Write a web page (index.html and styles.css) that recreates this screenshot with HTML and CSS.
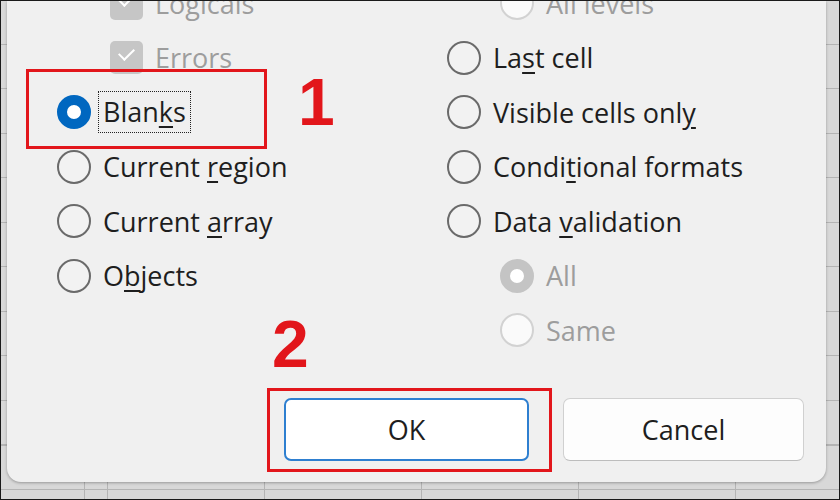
FILE: index.html
```html
<!DOCTYPE html>
<html lang="en">
<head>
    <meta charset="UTF-8">
    <meta name="viewport" content="width=device-width, initial-scale=1.0">
    <title>Go To Special</title>
    <link rel="stylesheet" href="styles.css">
</head>
<body>
    <div class="frame">
        <div class="dialog">
            <div class="options">
                <div class="col">
                    <div class="opt sub disabled"><span class="check"></span><span>Logicals</span></div>
                    <div class="opt sub disabled"><span class="check"></span><span>Errors</span></div>
                    <div class="opt"><span class="radio on"></span><span class="focus">Blan<u>k</u>s</span></div>
                    <div class="opt"><span class="radio"></span><span>Current <u>r</u>egion</span></div>
                    <div class="opt"><span class="radio"></span><span>Current <u>a</u>rray</span></div>
                    <div class="opt"><span class="radio"></span><span>O<u>b</u>jects</span></div>
                </div>
                <div class="col">
                    <div class="opt sub disabled"><span class="radio"></span><span>All levels</span></div>
                    <div class="opt"><span class="radio"></span><span>La<u>s</u>t cell</span></div>
                    <div class="opt"><span class="radio"></span><span>Visible cells onl<u>y</u></span></div>
                    <div class="opt"><span class="radio"></span><span>Condi<u>t</u>ional formats</span></div>
                    <div class="opt"><span class="radio"></span><span>Data <u>v</u>alidation</span></div>
                    <div class="opt sub disabled"><span class="radio on"></span><span>All</span></div>
                    <div class="opt sub disabled"><span class="radio"></span><span>Same</span></div>
                </div>
            </div>
            <div class="buttons">
                <button class="btn btn-default">OK</button>
                <button class="btn">Cancel</button>
            </div>

            <div class="mark mark-blanks"></div>
            <div class="mark mark-ok"></div>
            <div class="step step-1">1</div>
            <div class="step step-2">2</div>
        </div>
    </div>
</body>
</html>
```

FILE: styles.css
```css
html, body {
    margin: 0;
    padding: 0;
    background: #111;
}
.frame {
    box-sizing: border-box;
    width: 840px;
    height: 500px;
    border: 1px solid #1a1a1a;
    overflow: hidden;
    background-color: #d8d8d8;
    background-image:
        linear-gradient(90deg, transparent 83px, #b4b4b4 83px, #b4b4b4 84px, transparent 84px),
        repeating-linear-gradient(90deg, transparent 0, transparent 106px, #b4b4b4 106px, #b4b4b4 107px, transparent 107px, transparent 157px),
        repeating-linear-gradient(180deg, transparent 0, transparent 43px, #b4b4b4 43px, #b4b4b4 44px, transparent 44px, transparent 44.5px);
    font-family: "Open Sans", "Noto Sans", sans-serif;
}
.dialog {
    position: relative;
    box-sizing: border-box;
    margin-left: 6px;
    width: 819px;
    height: 481px;
    background: #f0f0f0;
    border-radius: 0 0 14px 14px;
    box-shadow: 0 1px 3px rgba(0, 0, 0, 0.3);
    display: flex;
    flex-direction: column;
}
.options {
    display: grid;
    grid-template-columns: 390px 1fr;
    margin-top: -25px;
    padding-left: 50px;
}
.opt {
    display: flex;
    align-items: center;
    gap: 12px;
    height: 54.5px;
    font-size: 27px;
    color: #1e1e1e;
    white-space: nowrap;
}
.opt u {
    text-underline-offset: 4px;
    text-decoration-thickness: 2px;
}
.opt.sub {
    padding-left: 53px;
}
.opt.disabled {
    color: #9d9d9d;
}
.radio {
    box-sizing: border-box;
    flex: none;
    width: 34px;
    height: 34px;
    border-radius: 50%;
    border: 2px solid #6a6a6a;
    background: #f2f2f2;
}
.radio.on {
    border: 10px solid #0067c0;
    background: #fff;
}
.disabled .radio {
    border: 2px solid #d2d2d2;
    background: #fafafa;
}
.disabled .radio.on {
    border: 10px solid #c4c4c4;
    background: #fff;
}
.check {
    position: relative;
    flex: none;
    width: 33px;
    height: 33px;
    border-radius: 5px;
    background: #c6c6c6;
}
.check::after {
    content: "";
    position: absolute;
    left: 9px;
    top: 7px;
    width: 13px;
    height: 7px;
    border-left: 2px solid #fff;
    border-bottom: 2px solid #fff;
    transform: rotate(-45deg);
}
.focus {
    margin-left: -5px;
    padding: 2px 4px;
    line-height: 36px;
    border: 1px dotted #222;
}
.buttons {
    display: flex;
    justify-content: flex-end;
    gap: 34px;
    margin-top: auto;
    padding: 0 22px 21px 0;
}
.btn {
    box-sizing: border-box;
    width: 241px;
    height: 63px;
    background: #fdfdfd;
    border: 1px solid #d0d0d0;
    border-bottom-color: #bdbdbd;
    border-radius: 7px;
    font-family: "Open Sans", "Noto Sans", sans-serif;
    font-size: 27px;
    color: #1e1e1e;
}
.btn-default {
    width: 245px;
    border: 2px solid #2e7fd0;
    background: #fff;
}
.mark {
    position: absolute;
    box-sizing: border-box;
    border: 3px solid #e2161b;
}
.mark-blanks {
    left: 19px;
    top: 68px;
    width: 241px;
    height: 80px;
}
.mark-ok {
    left: 260px;
    top: 387px;
    width: 285px;
    height: 84px;
}
.step {
    position: absolute;
    font-family: "Liberation Sans", Arial, sans-serif;
    font-weight: bold;
    font-size: 66px;
    line-height: 1;
    color: #e2161b;
}
.step-1 {
    left: 291px;
    top: 68px;
}
.step-2 {
    left: 265px;
    top: 310px;
}
```
